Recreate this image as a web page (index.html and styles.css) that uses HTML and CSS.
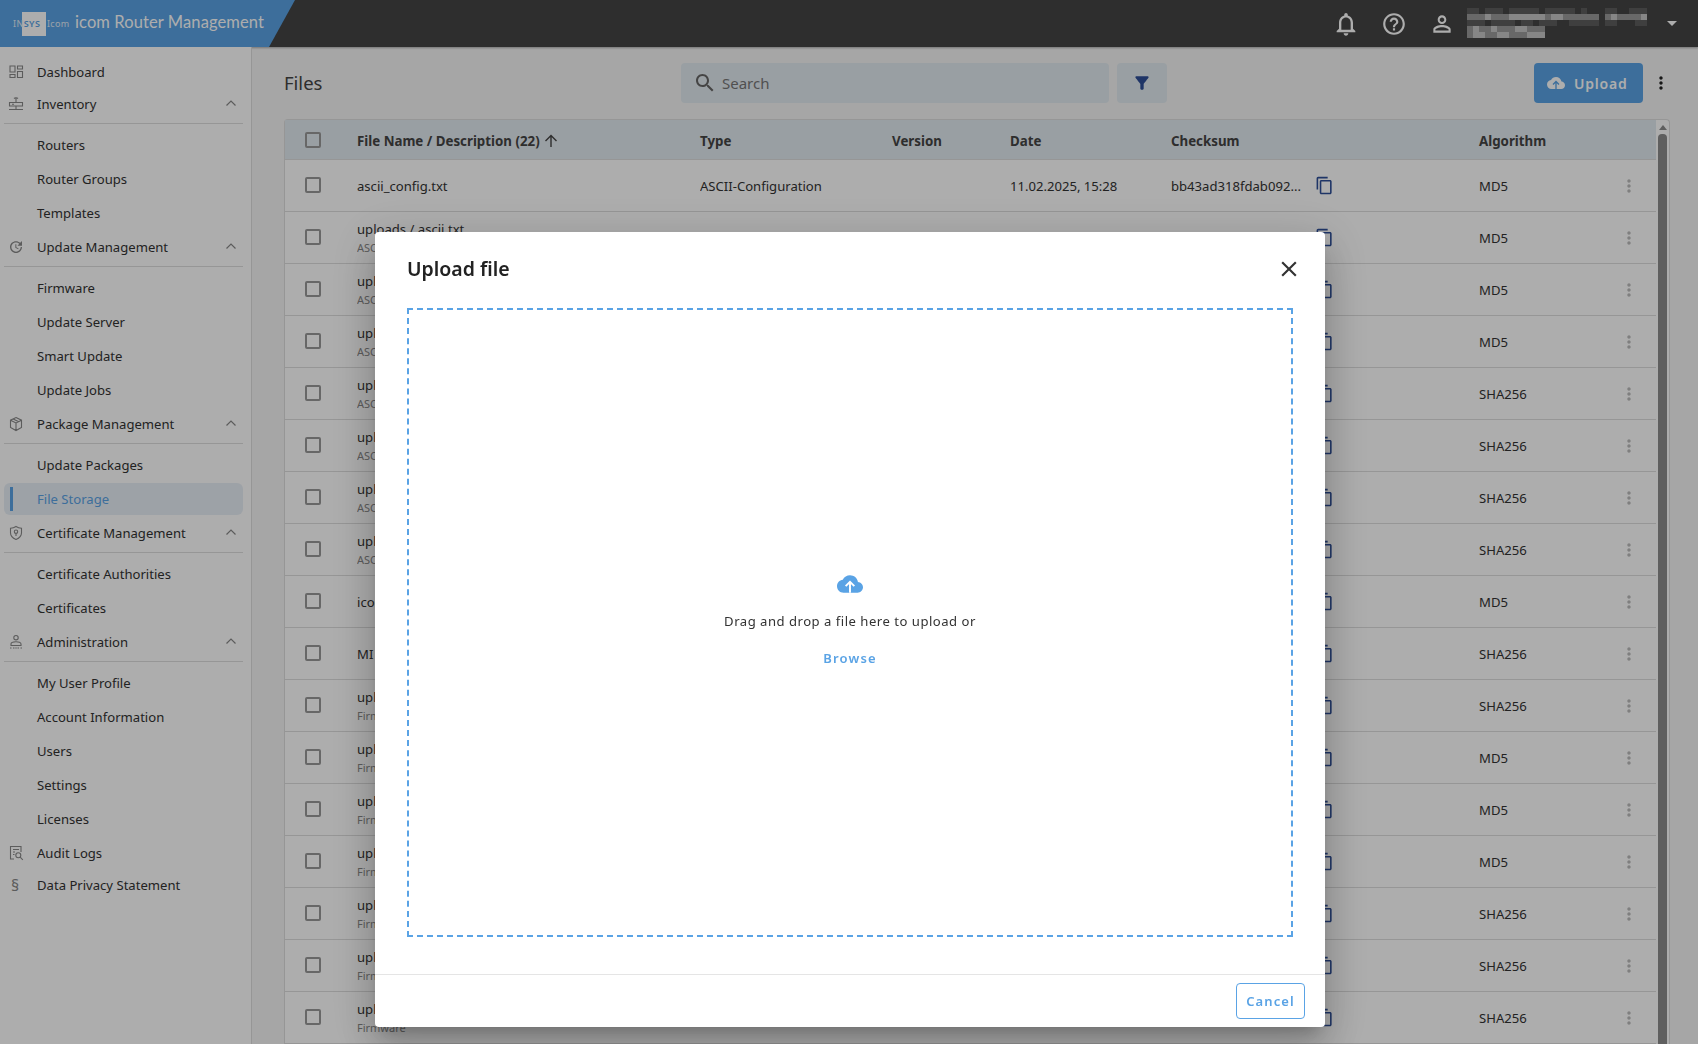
FILE: index.html
```html
<!DOCTYPE html>
<html lang="en">
<head>
    <meta charset="UTF-8">
    <title>Files - icom Router Management</title>
    <link rel="stylesheet" href="styles.css">
</head>
<body>

<svg class="sprite">
    <symbol id="i-copy" viewBox="0 0 24 24"><path d="M16 1H4c-1.1 0-2 .9-2 2v14h2V3h12V1zm3 4H8c-1.1 0-2 .9-2 2v14c0 1.1.9 2 2 2h11c1.1 0 2-.9 2-2V7c0-1.1-.9-2-2-2zm0 16H8V7h11v14z"/></symbol>
    <symbol id="i-more" viewBox="0 0 24 24"><path d="M12 8c1.1 0 2-.9 2-2s-.9-2-2-2-2 .9-2 2 .9 2 2 2zm0 2c-1.1 0-2 .9-2 2s.9 2 2 2 2-.9 2-2-.9-2-2-2zm0 6c-1.1 0-2 .9-2 2s.9 2 2 2 2-.9 2-2-.9-2-2-2z"/></symbol>
    <symbol id="i-up" viewBox="0 0 12 8"><path d="M1.500 6.500 6 2l4.500 4.500" fill="none" stroke="currentColor" stroke-width="1.200"/></symbol>
    <symbol id="i-cloud" viewBox="0 0 24 24"><path d="M19.350 10.040C18.670 6.590 15.640 4 12 4 9.110 4 6.600 5.640 5.350 8.040 2.340 8.360 0 10.910 0 14c0 3.310 2.690 6 6 6h13c2.760 0 5-2.240 5-5 0-2.640-2.050-4.780-4.650-4.960z"/><path class="cloud-arrow" d="M12 20v-9.500M8 14l4-4 4 4"/></symbol>
</svg>

<header class="topbar">
    <div class="brand">
        <div class="logo">
            <span class="logo-square"></span>
            <span class="logo-insys">IN<b>SYS</b></span>
            <span class="logo-icom">Icom</span>
        </div>
        <span class="brand-name">icom Router Management</span>
    </div>
    <div class="topbar-right">
        <svg class="top-icon bell" viewBox="0 0 24 24"><path d="M12 22c1.100 0 2-.9 2-2h-4c0 1.100.9 2 2 2zm6-6v-5c0-3.070-1.630-5.640-4.500-6.320V4c0-.83-.67-1.500-1.500-1.500s-1.500.67-1.500 1.500v.68C7.640 5.360 6 7.920 6 11v5l-2 2v1h16v-1l-2-2zm-2 1H8v-6c0-2.480 1.510-4.500 4-4.500s4 2.020 4 4.500v6z"/></svg>
        <svg class="top-icon help" viewBox="0 0 24 24"><path d="M11 18h2v-2h-2v2zm1-16C6.480 2 2 6.480 2 12s4.480 10 10 10 10-4.480 10-10S17.520 2 12 2zm0 18c-4.410 0-8-3.590-8-8s3.590-8 8-8 8 3.590 8 8-3.590 8-8 8zm0-14c-2.210 0-4 1.790-4 4h2c0-1.100.9-2 2-2s2 .9 2 2c0 2-3 1.750-3 5h2c0-2.250 3-2.500 3-5 0-2.210-1.790-4-4-4z"/></svg>
        <svg class="top-icon user" viewBox="0 0 24 24"><path d="M12 5.900c1.160 0 2.100.94 2.100 2.100s-.94 2.100-2.100 2.100S9.900 9.160 9.900 8s.94-2.100 2.100-2.100m0 9c2.970 0 6.100 1.460 6.100 2.100v1.100H5.900V17c0-.64 3.130-2.100 6.100-2.100M12 4C9.790 4 8 5.790 8 8s1.790 4 4 4 4-1.790 4-4-1.790-4-4-4zm0 9c-2.670 0-8 1.340-8 4v3h16v-3c0-2.660-5.330-4-8-4z"/></svg>
        <!-- user name is pixelated in the screenshot -->
        <svg class="mosaic" viewBox="0 0 186 30" fill="none" stroke-width="6">
            <path stroke="#5e5e5e" d="M0 3h12M18 3h18M42 3h30M78 3h30M114 3h6M138 3h12M162 3h18M0 15h18M24 15h24M54 15h12M72 15h18M102 15h30M138 15h12M168 15h12"/>
            <path stroke="#9a9a9a" d="M0 9h18M24 9h18M78 9h6M96 9h36M138 9h6M150 9h24M0 21h6M12 21h12M30 21h18M60 21h18M0 27h6M18 27h12M42 27h18"/>
            <path stroke="#c6c6c6" d="M18 9h6M42 9h36M84 9h12M144 9h6M174 9h6M6 21h6M24 21h6M48 21h12M6 27h12M30 27h12M60 27h12M72 27h6"/>
        </svg>
        <span class="caret"></span>
    </div>
</header>

<div class="layout">
    <nav class="sidebar">
        <a class="nav-head">
            <svg class="nav-icon" viewBox="0 0 16 16"><path d="M2 2h5v6H2zM9.500 2h5v3h-5zM2 10.500h5v3H2zM9.500 7.500h5v6h-5z"/></svg>
            <span>Dashboard</span>
        </a>

        <a class="nav-head">
            <svg class="nav-icon" viewBox="0 0 16 16"><path d="M1.500 6.500h13v3.500h-13zM8 6.500V2M6 2.500c1-1 3-1 4 0M8 10v3M1 13.500h14M4 8.200h2"/></svg>
            <span>Inventory</span>
            <svg class="chevron"><use href="#i-up"/></svg>
        </a>
        <div class="nav-children">
            <a class="nav-item">Routers</a>
            <a class="nav-item">Router Groups</a>
            <a class="nav-item">Templates</a>
        </div>

        <a class="nav-head">
            <svg class="nav-icon fill" viewBox="0 0 24 24"><path d="M21 10.120h-6.780l2.740-2.820c-2.730-2.700-7.150-2.800-9.880-.1-2.730 2.710-2.730 7.080 0 9.790s7.150 2.710 9.880 0C18.320 15.650 19 14.080 19 12.100h2c0 1.980-.88 4.550-2.640 6.290-3.510 3.480-9.210 3.480-12.720 0-3.500-3.470-3.530-9.110-.02-12.580s9.140-3.470 12.650 0L21 3v7.120zM12.500 8v4.250l3.500 2.080-.72 1.210L11 13V8h1.500z"/></svg>
            <span>Update Management</span>
            <svg class="chevron"><use href="#i-up"/></svg>
        </a>
        <div class="nav-children">
            <a class="nav-item">Firmware</a>
            <a class="nav-item">Update Server</a>
            <a class="nav-item">Smart Update</a>
            <a class="nav-item">Update Jobs</a>
        </div>

        <a class="nav-head">
            <svg class="nav-icon" viewBox="0 0 16 16"><path d="M8 1.500l5.500 2.700v7.300L8 14.500l-5.500-3V4.200zM2.500 4.200 8 7l5.500-2.800M8 7v7.500M5.200 2.900l5.600 2.800"/></svg>
            <span>Package Management</span>
            <svg class="chevron"><use href="#i-up"/></svg>
        </a>
        <div class="nav-children">
            <a class="nav-item">Update Packages</a>
            <a class="nav-item active">File Storage</a>
        </div>

        <a class="nav-head">
            <svg class="nav-icon" viewBox="0 0 16 16"><path d="M8 1.500c1.800 1.200 3.600 1.700 5.500 1.800v4.400c0 3-2.200 5.400-5.500 6.800-3.300-1.400-5.500-3.800-5.500-6.800V3.300C4.400 3.200 6.200 2.700 8 1.500zM8 8.500V11"/><circle cx="8" cy="6.700" r="1.700"/></svg>
            <span>Certificate Management</span>
            <svg class="chevron"><use href="#i-up"/></svg>
        </a>
        <div class="nav-children">
            <a class="nav-item">Certificate Authorities</a>
            <a class="nav-item">Certificates</a>
        </div>

        <a class="nav-head">
            <svg class="nav-icon" viewBox="0 0 16 16"><circle cx="8" cy="3.700" r="2.200"/><path d="M3 11.500V10c0-1.300 2.500-2.300 5-2.300s5 1 5 2.300v1.500zM2 14h1.500M5 14h1.500M9.500 14H11M12.500 14H14M7.300 14h1.400"/></svg>
            <span>Administration</span>
            <svg class="chevron"><use href="#i-up"/></svg>
        </a>
        <div class="nav-children">
            <a class="nav-item">My User Profile</a>
            <a class="nav-item">Account Information</a>
            <a class="nav-item">Users</a>
            <a class="nav-item">Settings</a>
            <a class="nav-item">Licenses</a>
        </div>

        <a class="nav-head">
            <svg class="nav-icon" viewBox="0 0 16 16"><path d="M6 14H2.500V1.500h10.500V7M5 4.500h6M5 7h2M5 9.500h1.500"/><circle cx="10.300" cy="10.300" r="2.500"/><path d="M12.200 12.200 14.800 14.800"/></svg>
            <span>Audit Logs</span>
        </a>
        <a class="nav-head">
            <span class="nav-glyph">§</span>
            <span>Data Privacy Statement</span>
        </a>
    </nav>

    <main class="content">
        <div class="toolbar">
            <h1 class="page-title">Files</h1>
            <div class="search">
                <svg viewBox="0 0 24 24"><path d="M15.500 14h-.79l-.28-.27C15.410 12.590 16 11.110 16 9.500 16 5.910 13.090 3 9.500 3S3 5.910 3 9.500 5.910 16 9.500 16c1.610 0 3.090-.59 4.230-1.570l.27.28v.79l5 4.990L20.490 19l-4.990-5zm-6 0C7.010 14 5 11.990 5 9.500S7.010 5 9.500 5 14 7.010 14 9.500 11.990 14 9.500 14z"/></svg>
                <span>Search</span>
            </div>
            <button class="filter-btn">
                <svg viewBox="0 0 24 24"><path d="M4.250 5.610C6.270 8.200 10 13 10 13v6c0 .55.45 1 1 1h2c.55 0 1-.45 1-1v-6s3.720-4.800 5.740-7.390c.51-.66.04-1.610-.79-1.610H5.040c-.83 0-1.300.95-.79 1.610z"/></svg>
            </button>
            <button class="upload-btn">
                <svg><use href="#i-cloud"/></svg>
                Upload
            </button>
            <svg class="toolbar-more"><use href="#i-more"/></svg>
        </div>

        <div class="table-card">
            <table class="files">
                <colgroup>
                    <col class="c-check"><col class="c-name"><col class="c-type"><col class="c-version">
                    <col class="c-date"><col class="c-sum"><col class="c-algo"><col class="c-more">
                </colgroup>
                <thead>
                    <tr>
                        <th class="check"><span class="box"></span></th>
                        <th><span class="sorted">File Name / Description (22)
                            <svg viewBox="0 0 14 14"><path d="M7 13V1.500M1.500 7 7 1.500 12.500 7"/></svg></span></th>
                        <th>Type</th>
                        <th>Version</th>
                        <th>Date</th>
                        <th>Checksum</th>
                        <th>Algorithm</th>
                        <th></th>
                    </tr>
                </thead>
                <tbody>
                    <tr><td class="check"><span class="box"></span></td><td>ascii_config.txt</td><td>ASCII-Configuration</td><td></td><td>11.02.2025, 15:28</td><td><div class="sum"><span>bb43ad318fdab092...</span><svg class="copy"><use href="#i-copy"/></svg></div></td><td>MD5</td><td class="more"><svg><use href="#i-more"/></svg></td></tr>
                    <tr><td class="check"><span class="box"></span></td><td><div class="fname">uploads / ascii.txt</div><div class="sub">ASCII-Configuration</div></td><td></td><td></td><td></td><td><div class="sum"><span></span><svg class="copy"><use href="#i-copy"/></svg></div></td><td>MD5</td><td class="more"><svg><use href="#i-more"/></svg></td></tr>
                    <tr><td class="check"><span class="box"></span></td><td><div class="fname">uploads</div><div class="sub">ASCII-Configuration</div></td><td></td><td></td><td></td><td><div class="sum"><span></span><svg class="copy"><use href="#i-copy"/></svg></div></td><td>MD5</td><td class="more"><svg><use href="#i-more"/></svg></td></tr>
                    <tr><td class="check"><span class="box"></span></td><td><div class="fname">uploads</div><div class="sub">ASCII-Configuration</div></td><td></td><td></td><td></td><td><div class="sum"><span></span><svg class="copy"><use href="#i-copy"/></svg></div></td><td>MD5</td><td class="more"><svg><use href="#i-more"/></svg></td></tr>
                    <tr><td class="check"><span class="box"></span></td><td><div class="fname">uploads</div><div class="sub">ASCII-Configuration</div></td><td></td><td></td><td></td><td><div class="sum"><span></span><svg class="copy"><use href="#i-copy"/></svg></div></td><td>SHA256</td><td class="more"><svg><use href="#i-more"/></svg></td></tr>
                    <tr><td class="check"><span class="box"></span></td><td><div class="fname">uploads</div><div class="sub">ASCII-Configuration</div></td><td></td><td></td><td></td><td><div class="sum"><span></span><svg class="copy"><use href="#i-copy"/></svg></div></td><td>SHA256</td><td class="more"><svg><use href="#i-more"/></svg></td></tr>
                    <tr><td class="check"><span class="box"></span></td><td><div class="fname">uploads</div><div class="sub">ASCII-Configuration</div></td><td></td><td></td><td></td><td><div class="sum"><span></span><svg class="copy"><use href="#i-copy"/></svg></div></td><td>SHA256</td><td class="more"><svg><use href="#i-more"/></svg></td></tr>
                    <tr><td class="check"><span class="box"></span></td><td><div class="fname">uploads</div><div class="sub">ASCII-Configuration</div></td><td></td><td></td><td></td><td><div class="sum"><span></span><svg class="copy"><use href="#i-copy"/></svg></div></td><td>SHA256</td><td class="more"><svg><use href="#i-more"/></svg></td></tr>
                    <tr><td class="check"><span class="box"></span></td><td>icom</td><td></td><td></td><td></td><td><div class="sum"><span></span><svg class="copy"><use href="#i-copy"/></svg></div></td><td>MD5</td><td class="more"><svg><use href="#i-more"/></svg></td></tr>
                    <tr><td class="check"><span class="box"></span></td><td>MI</td><td></td><td></td><td></td><td><div class="sum"><span></span><svg class="copy"><use href="#i-copy"/></svg></div></td><td>SHA256</td><td class="more"><svg><use href="#i-more"/></svg></td></tr>
                    <tr><td class="check"><span class="box"></span></td><td><div class="fname">uploads</div><div class="sub">Firmware</div></td><td></td><td></td><td></td><td><div class="sum"><span></span><svg class="copy"><use href="#i-copy"/></svg></div></td><td>SHA256</td><td class="more"><svg><use href="#i-more"/></svg></td></tr>
                    <tr><td class="check"><span class="box"></span></td><td><div class="fname">uploads</div><div class="sub">Firmware</div></td><td></td><td></td><td></td><td><div class="sum"><span></span><svg class="copy"><use href="#i-copy"/></svg></div></td><td>MD5</td><td class="more"><svg><use href="#i-more"/></svg></td></tr>
                    <tr><td class="check"><span class="box"></span></td><td><div class="fname">uploads</div><div class="sub">Firmware</div></td><td></td><td></td><td></td><td><div class="sum"><span></span><svg class="copy"><use href="#i-copy"/></svg></div></td><td>MD5</td><td class="more"><svg><use href="#i-more"/></svg></td></tr>
                    <tr><td class="check"><span class="box"></span></td><td><div class="fname">uploads</div><div class="sub">Firmware</div></td><td></td><td></td><td></td><td><div class="sum"><span></span><svg class="copy"><use href="#i-copy"/></svg></div></td><td>MD5</td><td class="more"><svg><use href="#i-more"/></svg></td></tr>
                    <tr><td class="check"><span class="box"></span></td><td><div class="fname">uploads</div><div class="sub">Firmware</div></td><td></td><td></td><td></td><td><div class="sum"><span></span><svg class="copy"><use href="#i-copy"/></svg></div></td><td>SHA256</td><td class="more"><svg><use href="#i-more"/></svg></td></tr>
                    <tr><td class="check"><span class="box"></span></td><td><div class="fname">uploads</div><div class="sub">Firmware</div></td><td></td><td></td><td></td><td><div class="sum"><span></span><svg class="copy"><use href="#i-copy"/></svg></div></td><td>SHA256</td><td class="more"><svg><use href="#i-more"/></svg></td></tr>
                    <tr><td class="check"><span class="box"></span></td><td><div class="fname">uploads</div><div class="sub">Firmware</div></td><td></td><td></td><td></td><td><div class="sum"><span></span><svg class="copy"><use href="#i-copy"/></svg></div></td><td>SHA256</td><td class="more"><svg><use href="#i-more"/></svg></td></tr>
                </tbody>
            </table>
            <div class="scrollbar">
                <span class="scroll-arrow"></span>
                <span class="scroll-thumb"></span>
            </div>
        </div>
    </main>
</div>

<div class="backdrop">
    <section class="dialog">
        <div class="dialog-head">
            <h2>Upload file</h2>
            <svg class="dialog-close" viewBox="0 0 24 24"><path d="M19 6.410 17.590 5 12 10.590 6.410 5 5 6.410 10.590 12 5 17.590 6.410 19 12 13.410 17.590 19 19 17.590 13.410 12z"/></svg>
        </div>
        <div class="dialog-body">
            <div class="dropzone">
                <svg class="drop-icon"><use href="#i-cloud"/></svg>
                <p>Drag and drop a file here to upload or</p>
                <a class="browse">Browse</a>
            </div>
        </div>
        <div class="dialog-foot">
            <button class="cancel-btn">Cancel</button>
        </div>
    </section>
</div>

</body>
</html>
```

FILE: styles.css
```css
* {
    box-sizing: border-box;
}

html, body {
    height: 100%;
    margin: 0;
    overflow: hidden;
}

body {
    font-family: "Noto Sans", sans-serif;
    font-size: 13.100px;
    color: #333;
    background-color: #f5f5f5;
}

.sprite {
    display: none;
}

.cloud-arrow {
    fill: none;
    stroke: var(--arrow, #fff);
    stroke-width: 1.800;
}

/* top bar */

.topbar {
    height: 47px;
    display: flex;
    justify-content: space-between;
    background-color: #444;
    box-shadow: 0 1px 2px rgba(0, 0, 0, .3);
}

.brand {
    width: 295px;
    display: flex;
    align-items: center;
    padding-left: 12px;
    background-color: #5aa3e5;
    clip-path: polygon(0 0, 100% 0, 269px 100%, 0 100%);
}

.logo {
    position: relative;
    width: 63px;
    height: 24px;
    flex-shrink: 0;
    color: #fff;
}

.logo-square {
    position: absolute;
    left: 10px;
    top: 0;
    width: 24px;
    height: 24px;
    background-color: #fff;
}

.logo-insys {
    position: absolute;
    left: 1px;
    top: 5px;
    font-size: 9px;
    line-height: 14px;
    letter-spacing: .4px;
    color: #e4eef8;
}

.logo-insys b {
    font-weight: 600;
    color: #5aa3e5;
}

.logo-icom {
    position: absolute;
    left: 35px;
    top: 5px;
    font-size: 9px;
    line-height: 14px;
    letter-spacing: .3px;
    color: #e4eef8;
}

.brand-name {
    margin-bottom: 4px;
    font-family: Lato, sans-serif;
    font-size: 16.500px;
    letter-spacing: .1px;
    color: #fff;
    white-space: nowrap;
}

.topbar-right {
    display: flex;
    align-items: center;
    padding-right: 21px;
}

.top-icon {
    width: 26px;
    height: 26px;
    margin-right: 22px;
    fill: #fff;
}

.top-icon.bell {
    width: 28px;
    height: 28px;
    margin-right: 21px;
}

.top-icon.user {
    margin-right: 12px;
}

.mosaic {
    width: 186px;
    height: 30px;
    margin-bottom: 2px;
}

.caret {
    width: 0;
    height: 0;
    margin-left: 14px;
    border-left: 5px solid transparent;
    border-right: 5px solid transparent;
    border-top: 5px solid #fff;
}

/* layout */

.layout {
    display: flex;
    height: 997px;
}

/* sidebar */

.sidebar {
    width: 252px;
    flex-shrink: 0;
    padding: 9px 8px 0 4px;
    background-color: #fff;
    border-right: 1px solid #ddd;
}

.nav-head {
    height: 32px;
    display: flex;
    align-items: center;
    position: relative;
    padding-left: 33px;
}

.nav-icon {
    position: absolute;
    left: 4px;
    top: 8px;
    width: 16px;
    height: 16px;
    fill: none;
    stroke: #888;
    stroke-width: 1.100;
}

.nav-icon.fill {
    fill: #888;
    stroke: none;
}

.nav-glyph {
    position: absolute;
    left: 7px;
    font-size: 16px;
    color: #888;
}

.chevron {
    position: absolute;
    right: 6px;
    top: 11px;
    width: 12px;
    height: 8px;
    color: #888;
}

.nav-children {
    margin-top: 3px;
    padding: 5px 0 1px;
    border-top: 1px solid #ddd;
}

.nav-item {
    height: 32px;
    margin-bottom: 2px;
    display: flex;
    align-items: center;
    position: relative;
    padding-left: 33px;
    border-radius: 6px;
}

.nav-item.active {
    color: #5aa3e5;
    background-color: #e8eff7;
}

.nav-item.active::before {
    content: "";
    position: absolute;
    left: 6px;
    top: 4px;
    width: 3px;
    height: 24px;
    background-color: #5aa3e5;
}

.nav-item:last-child {
    margin-bottom: 1px;
}

/* content */

.content {
    flex: 1;
    min-width: 0;
    padding: 16px 28px 0 32px;
}

.toolbar {
    height: 40px;
    display: flex;
    align-items: center;
}

.page-title {
    width: 397px;
    margin: 0 0 2px;
    font-size: 18.500px;
    font-weight: 400;
    color: #444;
}

.search {
    width: 428px;
    height: 40px;
    display: flex;
    align-items: center;
    padding-left: 12px;
    border-radius: 4px;
    background-color: #e2eaf0;
    font-size: 15px;
    color: #777;
}

.search svg {
    width: 24px;
    height: 24px;
    margin-right: 5px;
    fill: #666;
}

.filter-btn {
    width: 50px;
    height: 40px;
    margin-left: 8px;
    padding: 0;
    display: flex;
    align-items: center;
    justify-content: center;
    border: none;
    border-radius: 4px;
    background-color: #e2eaf0;
}

.filter-btn svg {
    width: 20px;
    height: 20px;
    fill: #2e4f98;
}

.upload-btn {
    --arrow: #5aa3e5;
    width: 109px;
    height: 40px;
    margin-left: auto;
    padding: 0 0 0 13px;
    display: flex;
    align-items: center;
    gap: 9px;
    border: none;
    border-radius: 4px;
    background-color: #5aa3e5;
    color: #fff;
    font-family: inherit;
    font-size: 14px;
    font-weight: 600;
    letter-spacing: .8px;
}

.upload-btn svg {
    width: 18px;
    height: 18px;
    fill: #fff;
}

.toolbar-more {
    width: 20px;
    height: 24px;
    margin: 0 -1px 0 8px;
    fill: #222;
}

/* table */

.table-card {
    display: flex;
    margin-top: 16px;
    background-color: #fff;
    border: 1px solid #ddd;
    border-bottom: none;
    border-radius: 4px 4px 0 0;
}

.files {
    width: 1371px;
    flex-shrink: 0;
    table-layout: fixed;
    border-collapse: collapse;
}

.c-check { width: 72px; }
.c-name { width: 343px; }
.c-type { width: 192px; }
.c-version { width: 118px; }
.c-date { width: 161px; }
.c-sum { width: 308px; }
.c-algo { width: 130px; }
.c-more { width: 47px; }

.files th {
    height: 39px;
    padding: 4px 0 0;
    text-align: left;
    font-size: 13.300px;
    font-weight: 700;
    color: #444;
    background-color: #e2eaf0;
    border-bottom: 1px solid #ddd;
}

.files td {
    height: 52px;
    padding: 1px 0 0;
    border-bottom: 1px solid #ddd;
    white-space: nowrap;
    overflow: hidden;
}

.files th.check {
    padding: 2px 0 0 20px;
}

.files td.check {
    padding: 0 0 0 20px;
}

.box {
    display: block;
    width: 16px;
    height: 16px;
    border: 2px solid #999;
    border-radius: 2px;
}

.sorted {
    display: inline-flex;
    align-items: center;
    gap: 4px;
}

.sorted svg {
    width: 14px;
    height: 14px;
    fill: none;
    stroke: #444;
    stroke-width: 1.400;
}

.fname {
    line-height: 20px;
}

.sub {
    font-size: 11px;
    line-height: 18px;
    color: #888;
}

.sum {
    display: flex;
    align-items: center;
}

.sum span {
    width: 144px;
}

.copy {
    width: 19px;
    height: 19px;
    fill: #2e4f98;
}

.more svg {
    display: block;
    width: 20px;
    height: 20px;
    margin-left: 10px;
    fill: #bbb;
}

.scrollbar {
    width: 14px;
    display: flex;
    flex-direction: column;
    align-items: center;
}

.scroll-arrow {
    margin-top: 5px;
    border-left: 4px solid transparent;
    border-right: 4px solid transparent;
    border-bottom: 5px solid #8c8c8c;
}

.scroll-thumb {
    flex: 1;
    width: 9px;
    margin-top: 4px;
    border-radius: 4px 4px 0 0;
    background-color: #8c8c8c;
}

/* upload dialog */

.backdrop {
    position: fixed;
    top: 0;
    left: 0;
    right: 0;
    bottom: 0;
    display: flex;
    justify-content: center;
    align-items: flex-start;
    padding-top: 232px;
    background-color: rgba(0, 0, 0, .32);
}

.dialog {
    width: 950px;
    height: 795px;
    margin-left: 2px;
    display: flex;
    flex-direction: column;
    background-color: #fff;
    border-radius: 4px;
    box-shadow: 0 11px 15px -7px rgba(0, 0, 0, .2), 0 24px 38px 3px rgba(0, 0, 0, .14), 0 9px 46px 8px rgba(0, 0, 0, .12);
}

.dialog-head {
    height: 76px;
    flex-shrink: 0;
    display: flex;
    align-items: center;
    justify-content: space-between;
    padding: 0 23px 3px 32px;
}

.dialog-head h2 {
    margin: 0;
    font-size: 19.500px;
    font-weight: 600;
    color: #222;
}

.dialog-close {
    width: 26px;
    height: 26px;
    fill: #333;
}

.dialog-body {
    flex: 1;
    padding: 0 32px 37px;
}

.dropzone {
    height: 100%;
    display: flex;
    flex-direction: column;
    align-items: center;
    justify-content: center;
    padding-bottom: 6px;
    border: 2px dashed #5aa3e5;
}

.drop-icon {
    width: 26px;
    height: 26px;
    fill: #5aa3e5;
}

.dropzone p {
    margin: 14px 0 17px;
    line-height: 20px;
    letter-spacing: .5px;
    color: #333;
}

.browse {
    font-size: 13px;
    line-height: 20px;
    font-weight: 600;
    letter-spacing: 1.200px;
    color: #5aa3e5;
}

.dialog-foot {
    height: 53px;
    flex-shrink: 0;
    display: flex;
    align-items: center;
    justify-content: flex-end;
    padding: 0 20px;
    border-top: 1px solid #e5e5e5;
}

.cancel-btn {
    width: 69px;
    height: 36px;
    padding: 0;
    border: 1px solid #5aa3e5;
    border-radius: 4px;
    background-color: #fff;
    color: #5aa3e5;
    font-family: inherit;
    font-size: 13px;
    font-weight: 600;
    letter-spacing: 1.100px;
}
```
